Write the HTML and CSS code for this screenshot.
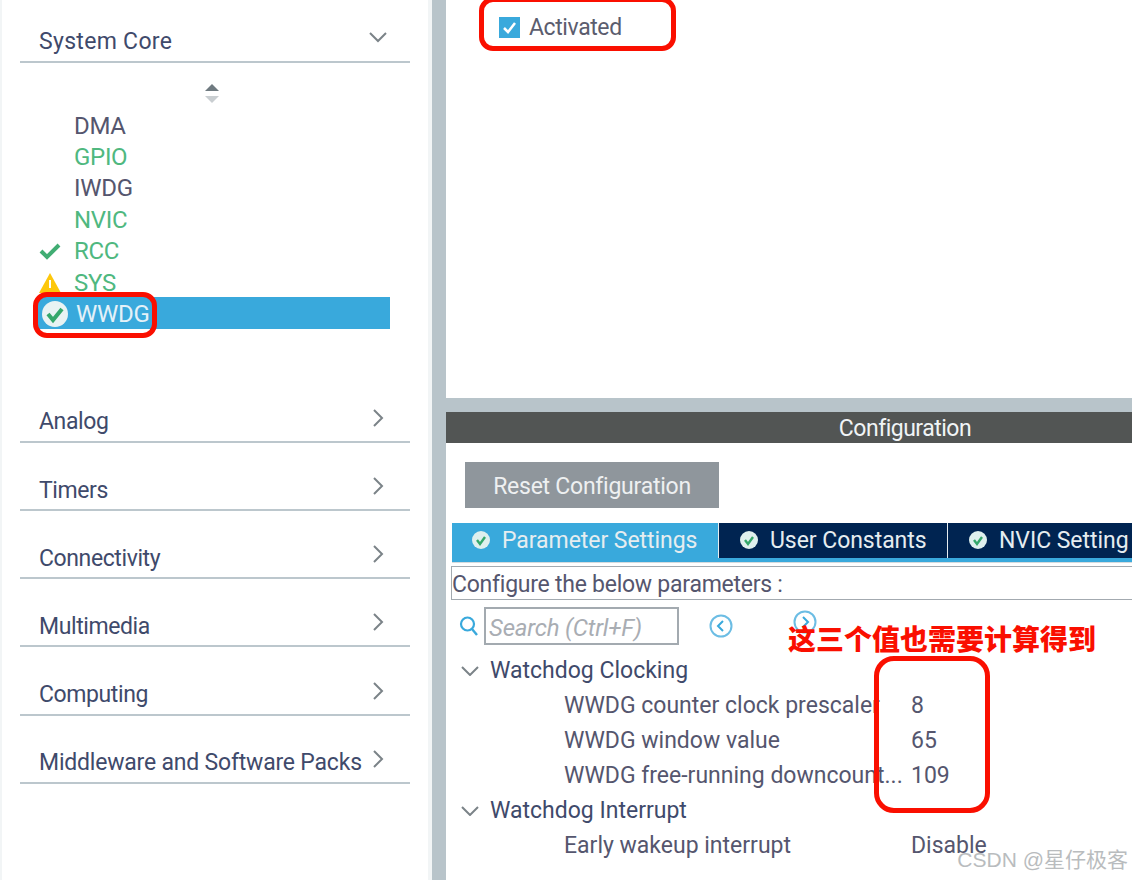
FILE: index.html
```html
<!DOCTYPE html>
<html lang="en">
  <head>
    <meta charset="UTF-8">
    <meta name="viewport" content="width=device-width, initial-scale=1.0">
    <title>WWDG Configuration</title>
    <link rel="stylesheet" href="styles.css">
  </head>
  <body>
    <div class="app">
      <!-- Left Panel -->
      <div class="left-panel">
        <div class="category category-open">
          <span>System Core</span>
          <svg class="chevron-down" width="20" height="12" viewBox="0 0 20 12"><path d="M2 2l8 8 8-8" /></svg>
        </div>
        <div class="sort-arrows">
          <svg width="16" height="20" viewBox="0 0 16 20"><path d="M8 0l7 7H1z" fill="#6f7a80" /><path d="M1 12h14l-7 7z" fill="#c9ced1" /></svg>
        </div>
        <ul class="peripherals">
          <li class="dark"><span class="status"></span>DMA</li>
          <li class="green"><span class="status"></span>GPIO</li>
          <li class="dark"><span class="status"></span>IWDG</li>
          <li class="green"><span class="status"></span>NVIC</li>
          <li class="green">
            <span class="status"><svg width="22" height="18" viewBox="0 0 22 18"><path d="M2 9l6 6L20 3" fill="none" stroke="#41ad73" stroke-width="4" /></svg></span>RCC
          </li>
          <li class="green">
            <span class="status"><svg width="24" height="20" viewBox="0 0 24 20"><path d="M12 0l11 20H1z" fill="#fdc70c" /><path d="M12 7v8" stroke="#fff" stroke-width="2" /></svg></span>SYS
          </li>
          <li class="selected">
            <span class="status"><svg width="28" height="28" viewBox="0 0 28 28"><circle cx="14" cy="14" r="13" fill="#e9f3f3" /><path d="M7 14l5 6 9-11" fill="none" stroke="#35a86b" stroke-width="4" /></svg></span>WWDG
          </li>
        </ul>
        <div class="category-list">
          <div class="category"><span>Analog</span><svg class="chevron-right" width="12" height="20" viewBox="0 0 12 20"><path d="M2 2l8 8-8 8" /></svg></div>
          <div class="category"><span>Timers</span><svg class="chevron-right" width="12" height="20" viewBox="0 0 12 20"><path d="M2 2l8 8-8 8" /></svg></div>
          <div class="category"><span>Connectivity</span><svg class="chevron-right" width="12" height="20" viewBox="0 0 12 20"><path d="M2 2l8 8-8 8" /></svg></div>
          <div class="category"><span>Multimedia</span><svg class="chevron-right" width="12" height="20" viewBox="0 0 12 20"><path d="M2 2l8 8-8 8" /></svg></div>
          <div class="category"><span>Computing</span><svg class="chevron-right" width="12" height="20" viewBox="0 0 12 20"><path d="M2 2l8 8-8 8" /></svg></div>
          <div class="category category-wide"><span>Middleware and Software Packs</span><svg class="chevron-right" width="12" height="20" viewBox="0 0 12 20"><path d="M2 2l8 8-8 8" /></svg></div>
        </div>
      </div>

      <!-- Right Panel -->
      <div class="right-panel">
        <div class="mode-panel">
          <label class="activated">
            <svg width="21" height="21" viewBox="0 0 21 21"><rect width="21" height="21" fill="#39a9dc" /><path d="M5 11l4 4 7-9" fill="none" stroke="#fff" stroke-width="2.5" /></svg>
            Activated
          </label>
        </div>
        <div class="config-panel">
          <div class="config-title">Configuration</div>
          <div class="reset-row"><button class="reset-btn">Reset Configuration</button></div>
          <div class="tabs">
            <div class="tab tab-active"><svg width="18" height="18" viewBox="0 0 18 18"><circle cx="9" cy="9" r="9" fill="#dff0ee" /><path d="M5 9l3 4 5-7" fill="none" stroke="#35a86b" stroke-width="2.4" /></svg>Parameter Settings</div>
            <div class="tab"><svg width="18" height="18" viewBox="0 0 18 18"><circle cx="9" cy="9" r="9" fill="#dff0ee" /><path d="M5 9l3 4 5-7" fill="none" stroke="#35a86b" stroke-width="2.4" /></svg>User Constants</div>
            <div class="tab tab-last"><svg width="18" height="18" viewBox="0 0 18 18"><circle cx="9" cy="9" r="9" fill="#dff0ee" /><path d="M5 9l3 4 5-7" fill="none" stroke="#35a86b" stroke-width="2.4" /></svg>NVIC Setting</div>
          </div>
          <div class="tab-strip"></div>
          <div class="configure-box">Configure the below parameters :</div>
          <div class="search-row">
            <svg class="search-icon" width="20" height="22" viewBox="0 0 20 22"><circle cx="8.5" cy="9" r="6.5" fill="none" stroke="#39a9dc" stroke-width="2.2" /><path d="M13 14l5 6" stroke="#39a9dc" stroke-width="2.4" /></svg>
            <div class="search-box">Search (Ctrl+F)</div>
            <svg class="nav-icon" width="24" height="24" viewBox="0 0 24 24"><circle cx="12" cy="12" r="10.5" fill="none" stroke="#6cbde4" stroke-width="2" /><path d="M14 7l-5 5 5 5" fill="none" stroke="#39a9dc" stroke-width="2" /></svg>
            <svg class="nav-icon nav-next" width="24" height="24" viewBox="0 0 24 24"><circle cx="12" cy="12" r="10.5" fill="none" stroke="#6cbde4" stroke-width="2" /><path d="M10 7l5 5-5 5" fill="none" stroke="#39a9dc" stroke-width="2" /></svg>
          </div>
          <div class="param-group"><svg width="18" height="10" viewBox="0 0 18 10"><path d="M1 1l8 8 8-8" /></svg>Watchdog Clocking</div>
          <div class="param"><span class="param-name">WWDG counter clock prescaler</span><span>8</span></div>
          <div class="param"><span class="param-name">WWDG window value</span><span>65</span></div>
          <div class="param"><span class="param-name">WWDG free-running downcount...</span><span>109</span></div>
          <div class="param-group"><svg width="18" height="10" viewBox="0 0 18 10"><path d="M1 1l8 8 8-8" /></svg>Watchdog Interrupt</div>
          <div class="param"><span class="param-name">Early wakeup interrupt</span><span>Disable</span></div>
        </div>
      </div>
    </div>

    <!-- Red annotations on top of the screenshot -->
    <div class="mark mark-activated"></div>
    <div class="mark mark-wwdg"></div>
    <div class="mark mark-values"></div>
    <div class="note">这三个值也需要计算得到</div>
    <div class="watermark">CSDN @星仔极客</div>
  </body>
</html>
```

FILE: styles.css
```css
/* Reset */
* {
  margin: 0;
  padding: 0;
  box-sizing: border-box;
  font-family: Roboto, "Liberation Sans", sans-serif;
}

html, body {
  width: 1132px;
  height: 880px;
  overflow: hidden;
  background-color: #ffffff;
}

.app {
  display: flex;
  height: 880px;
  background-color: #b8c4ca;
}

/* Left Panel */
.left-panel {
  width: 432px;
  margin-right: 14px;
  flex-shrink: 0;
  background-color: #ffffff;
  border-left: 2px solid #f2f5f6;
  border-right: 4px solid #f2f5f6;
  padding: 0 0 0 18px;
}

.category {
  display: flex;
  justify-content: space-between;
  align-items: center;
  width: 390px;
  height: 68.2px;
  padding: 0 20px 0 19px;
  color: #3f4a6b;
  font-size: 23px;
  letter-spacing: -0.4px;
  white-space: nowrap;
  border-bottom: 2px solid #bcc7cd;
}

.category span {
  position: relative;
  top: 14px;
}

.category svg {
  fill: none;
  stroke: #7b8388;
  stroke-width: 2;
  position: relative;
  top: 10px;
}

.category-open {
  height: 63px;
  letter-spacing: 0.3px;
}

.category-open span {
  top: 11px;
}

.category-open svg {
  top: 6px;
  margin-right: 2px;
}

.category-wide {
  letter-spacing: -0.2px;
}

.chevron-right {
  margin-right: 6px;
}

.sort-arrows {
  display: flex;
  justify-content: center;
  width: 384px;
  height: 46px;
  padding-top: 21px;
}

.peripherals {
  list-style: none;
}

.peripherals li {
  display: flex;
  align-items: center;
  width: 370px;
  height: 31.4px;
  padding-top: 2px;
  font-size: 24px;
  letter-spacing: -0.3px;
}

.status {
  display: flex;
  justify-content: center;
  align-items: center;
  flex-shrink: 0;
  width: 54px;
  height: 100%;
  padding-right: 6px;
  padding-left: 11px;
}

.dark {
  color: #55566e;
}

.green {
  color: #4fb87f;
}

.peripherals .selected {
  width: 352px;
  margin-left: 18px;
  background-color: #39a9dc;
  color: #e4f1f8;
}

.selected .status {
  width: 38px;
  padding: 0 5px 0 0;
}

.category-list {
  margin-top: 46px;
}

/* Right Panel */
.right-panel {
  flex: 1;
  min-width: 0;
  display: flex;
  flex-direction: column;
}

.mode-panel {
  height: 398px;
  margin-bottom: 14px;
  background-color: #ffffff;
  padding: 14px 0 0 53px;
}

.activated {
  display: flex;
  align-items: center;
  gap: 9px;
  color: #5b5d6e;
  font-size: 23px;
  letter-spacing: -0.4px;
}

.config-panel {
  flex: 1;
  background-color: #ffffff;
  overflow: hidden;
}

.config-title {
  height: 31px;
  line-height: 33px;
  background-color: #525554;
  color: #f0f4f6;
  text-align: center;
  font-size: 23px;
  letter-spacing: -0.5px;
  padding-left: 232px;
  white-space: nowrap;
}

.reset-row {
  padding: 19px 0 0 19px;
}

.reset-btn {
  width: 254px;
  height: 46px;
  padding-top: 3px;
  background-color: #8f969c;
  border: none;
  color: #eef0f1;
  font-size: 23px;
  letter-spacing: -0.25px;
}

.tabs {
  display: flex;
  height: 35px;
  margin: 15px 0 0 6px;
  overflow: hidden;
}

.tab {
  display: flex;
  align-items: center;
  flex-shrink: 0;
  gap: 12px;
  width: 229px;
  padding-left: 21px;
  padding-bottom: 1px;
  background-color: #002451;
  border-right: 1px solid #e6edf0;
  color: #e6edf0;
  font-size: 23px;
  letter-spacing: -0.05px;
  white-space: nowrap;
}

.tab svg {
  flex-shrink: 0;
}

.tab-active {
  width: 267px;
  padding-left: 20px;
  background-color: #39a9dc;
}

.tab-last {
  width: 184px;
  border-right: 0;
}

.tab-strip {
  height: 5px;
  margin-left: 6px;
  background-color: #39a9dc;
  border-bottom: 1px solid #d5dadd;
}

.configure-box {
  height: 34px;
  margin: 3px 0 0 5px;
  border: 1px solid #a3aab0;
  border-right: 0;
  color: #55566e;
  font-size: 23px;
  line-height: 35px;
  letter-spacing: -0.25px;
  white-space: nowrap;
}

.search-row {
  display: flex;
  align-items: center;
  height: 38px;
  margin-top: 7px;
  padding-left: 13px;
}

.search-box {
  width: 195px;
  height: 38px;
  margin-left: 5px;
  border: 2px solid #a3aab0;
  color: #a9adb3;
  font-size: 24px;
  font-style: italic;
  letter-spacing: -0.2px;
  line-height: 38px;
  padding-left: 3px;
  white-space: nowrap;
}

.nav-icon {
  margin-left: 30px;
}

.nav-next {
  margin-left: 60px;
  position: relative;
  top: -4px;
}

.param-group {
  display: flex;
  align-items: center;
  height: 35px;
  margin-top: 8px;
  padding-left: 15px;
  color: #3f4a6b;
  font-size: 23px;
}

.param-group svg {
  margin-right: 11px;
  fill: none;
  stroke: #7b8388;
  stroke-width: 2;
}

.param {
  display: flex;
  align-items: center;
  height: 35px;
  padding-left: 118px;
  color: #55566e;
  font-size: 23px;
}

.param-name {
  width: 347px;
  white-space: nowrap;
  flex-shrink: 0;
}

.param + .param-group {
  margin-top: 0;
}

/* Annotations */
.mark {
  position: absolute;
  border: 5px solid #fa0f00;
  border-radius: 14px;
}

.mark-activated {
  left: 479px;
  top: -3px;
  width: 197px;
  height: 54px;
}

.mark-wwdg {
  left: 33px;
  top: 292px;
  width: 124px;
  height: 46px;
}

.mark-values {
  left: 874px;
  top: 656px;
  width: 116px;
  height: 157px;
  border-radius: 20px;
}

.note {
  position: absolute;
  left: 788px;
  top: 620px;
  color: #fa0f00;
  font-family: "Noto Sans CJK SC", sans-serif;
  font-size: 28px;
  font-weight: 900;
  line-height: 36px;
  white-space: nowrap;
}

.watermark {
  position: absolute;
  right: 4px;
  top: 846px;
  color: #b9bcbe;
  font-family: "Liberation Sans", "Noto Sans CJK SC", sans-serif;
  font-size: 21px;
  line-height: 28px;
  white-space: nowrap;
}
```
